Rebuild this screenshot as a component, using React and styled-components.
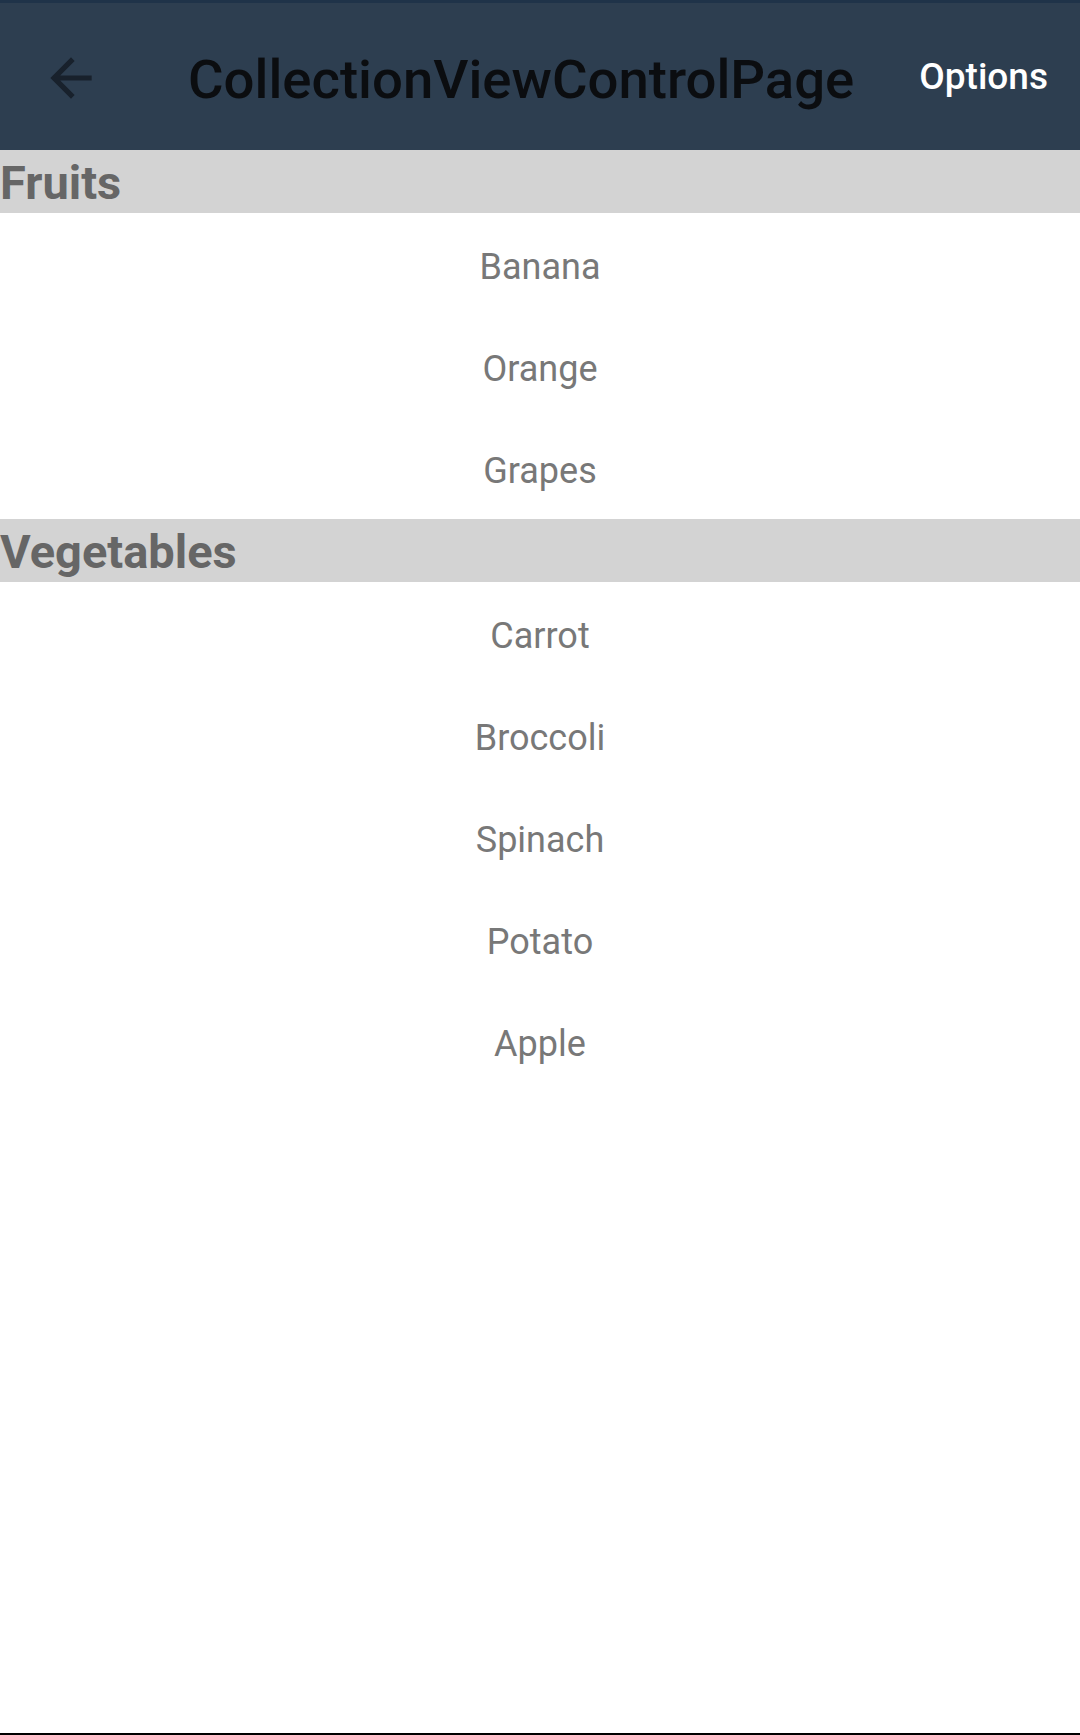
import styled, { createGlobalStyle } from "styled-components";

const groups = [
	{ name: "Fruits", items: ["Banana", "Orange", "Grapes"] },
	{ name: "Vegetables", items: ["Carrot", "Broccoli", "Spinach", "Potato", "Apple"] },
];

function BackArrow() {
	return (
		<svg width="62" height="62" viewBox="0 0 24 24" fill="#18212c">
			<path d="M20 11H7.83l5.59-5.59L12 4l-8 8 8 8 1.41-1.41L7.83 13H20v-2z" />
		</svg>
	);
}

export default function App() {
	return (
		<Page>
			<GlobalStyle />
			<Toolbar>
				<BackButton aria-label="Back">
					<BackArrow />
				</BackButton>
				<Title>CollectionViewControlPage</Title>
				<OptionsButton>Options</OptionsButton>
			</Toolbar>
			<List>
				{groups.map((group) => (
					<section key={group.name}>
						<GroupHeader>{group.name}</GroupHeader>
						{group.items.map((item) => (
							<Item key={item}>{item}</Item>
						))}
					</section>
				))}
			</List>
		</Page>
	);
}

const GlobalStyle = createGlobalStyle`
	html, body {
		margin: 0;
		padding: 0;
		background: #fff;
	}
	* {
		box-sizing: border-box;
	}
`;

const Page = styled.div`
	min-height: 1735px;
	display: flex;
	flex-direction: column;
	font-family: Roboto, "Noto Sans", sans-serif;
	border-bottom: 2px solid #000;
`;

const Toolbar = styled.header`
	height: 150px;
	display: flex;
	align-items: center;
	background: #2d3e50;
	border-top: 3px solid #1f3349;
	padding: 0 32px 0 40px;
`;

const BackButton = styled.button`
	width: 62px;
	height: 62px;
	padding: 0;
	border: 0;
	background: transparent;
	display: flex;
	margin-top: 2px;
	cursor: pointer;
`;

const Title = styled.h1`
	flex: 1;
	margin: 0 0 0 86px;
	padding-top: 4px;
	font-size: 54.5px;
	font-weight: 500;
	color: #0b0d10;
	white-space: nowrap;
`;

const OptionsButton = styled.button`
	border: 0;
	background: transparent;
	padding: 0;
	font-family: inherit;
	font-size: 37px;
	font-weight: 500;
	color: #fff;
	cursor: pointer;
`;

const List = styled.div`
	display: flex;
	flex-direction: column;
`;

const GroupHeader = styled.h2`
	height: 63px;
	margin: 0;
	display: flex;
	align-items: center;
	background: #d3d3d3;
	color: #666;
	font-size: 47px;
	font-weight: 700;
	padding-top: 2px;
`;

const Item = styled.div`
	height: 102px;
	display: flex;
	align-items: center;
	justify-content: center;
	color: #787878;
	font-size: 36px;
	padding-top: 6px;
`;
